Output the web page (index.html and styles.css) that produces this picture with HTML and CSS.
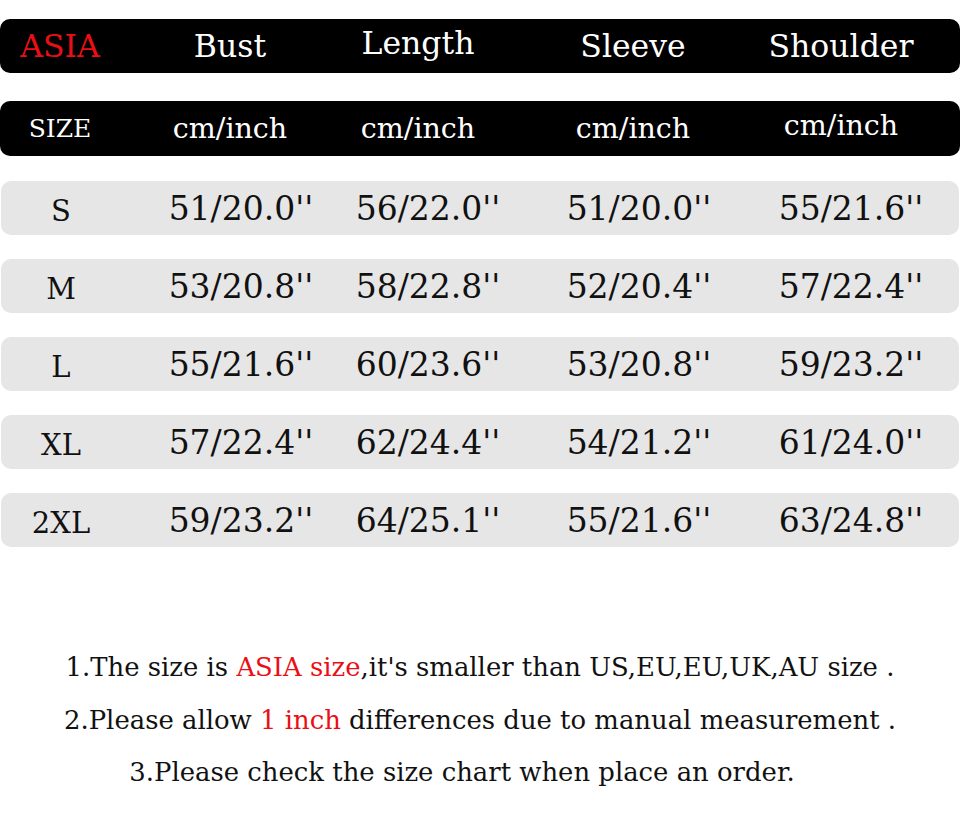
FILE: index.html
```html
<!DOCTYPE html>
<html lang="en">
<head>
<meta charset="utf-8">
<title>Size Chart</title>
<link rel="stylesheet" href="styles.css">
</head>
<body>
<div class="chart">
  <div class="bar head title">
    <span class="red">ASIA</span><span>Bust</span><span class="up">Length</span><span>Sleeve</span><span>Shoulder</span>
  </div>
  <div class="bar head units">
    <span class="small">SIZE</span><span>cm/inch</span><span>cm/inch</span><span>cm/inch</span><span class="up">cm/inch</span>
  </div>
  <div class="rows">
    <div class="bar data"><span class="sz">S</span><span>51/20.0''</span><span>56/22.0''</span><span>51/20.0''</span><span>55/21.6''</span></div>
    <div class="bar data"><span class="sz">M</span><span>53/20.8''</span><span>58/22.8''</span><span>52/20.4''</span><span>57/22.4''</span></div>
    <div class="bar data"><span class="sz">L</span><span>55/21.6''</span><span>60/23.6''</span><span>53/20.8''</span><span>59/23.2''</span></div>
    <div class="bar data"><span class="sz">XL</span><span>57/22.4''</span><span>62/24.4''</span><span>54/21.2''</span><span>61/24.0''</span></div>
    <div class="bar data"><span class="sz">2XL</span><span>59/23.2''</span><span>64/25.1''</span><span>55/21.6''</span><span>63/24.8''</span></div>
  </div>
</div>
<div class="notes">
  <p>1.The size is <span class="red">ASIA size</span>,it's smaller than US,EU,EU,UK,AU size .</p>
  <p>2.Please allow <span class="red">1 inch</span> differences due to manual measurement .</p>
  <p class="shift">3.Please check the size chart when place an order.</p>
</div>
</body>
</html>
```

FILE: styles.css
```css
* { box-sizing: border-box; }
html, body { margin: 0; padding: 0; background: #fff; }
body {
  width: 960px;
  height: 836px;
  overflow: hidden;
  font-family: "DejaVu Serif", serif;
  color: #111;
}
.chart {
  padding-top: 19px;
}
.bar {
  display: grid;
  align-items: center;
  border-radius: 10px;
  white-space: nowrap;
}
.bar span { justify-self: center; }
.head {
  background: #000;
  color: #fff;
  font-size: 31.5px;
  grid-template-columns: 120px 220px 156px 274px 142px 1fr;
}
.title { height: 54px; }
.units {
  height: 55px;
  margin-top: 28px;
  font-size: 28.5px;
}
.head .red { color: #ea0f16; }
.up { position: relative; top: -3px; }
.small { font-size: 25px; }
.rows {
  margin-top: 25px;
  display: flex;
  flex-direction: column;
  gap: 24px;
}
.data {
  height: 54px;
  background: #e6e6e6;
  color: #111;
  font-size: 33px;
  grid-template-columns: 120px 240px 134px 288px 136px 1fr;
  margin: 0 1px;
}
.data .sz { font-size: 29px; position: relative; top: 3px; }
.notes {
  margin-top: 94px;
  text-align: center;
  font-size: 25.9px;
  color: #111;
}
.notes p {
  margin: 0;
  line-height: 52.5px;
}
.notes .red { color: #ea0f16; }
.shift { padding-right: 36px; }
```
